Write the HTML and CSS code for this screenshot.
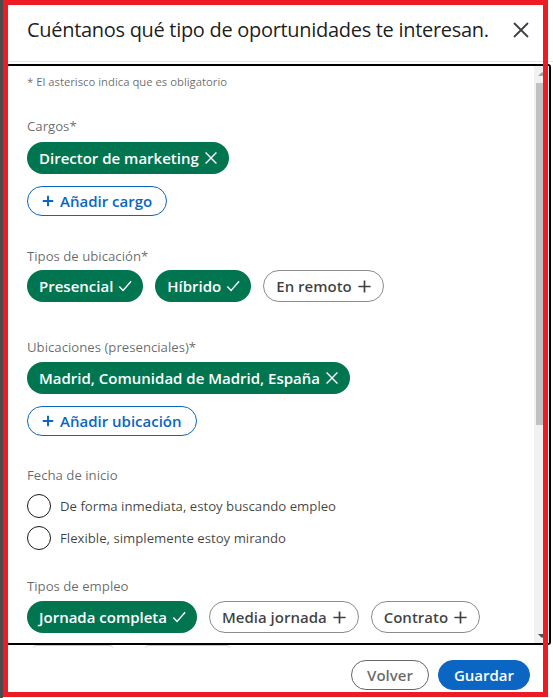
FILE: index.html
```html
<!DOCTYPE html>
<html lang="es">
<head>
<meta charset="utf-8">
<title>Preferencias</title>
<link rel="stylesheet" href="styles.css">
</head>
<body>
<div class="page">
  <div class="backdrop-strip"></div>
  <div class="modal">
    <header class="modal-header">
      <h2 class="modal-title">Cuéntanos qué tipo de oportunidades te interesan.</h2>
      <button class="close-btn" aria-label="Cerrar">
        <svg viewBox="0 0 24 24" width="24" height="24"><path d="M5 5 L19 19 M19 5 L5 19" /></svg>
      </button>
    </header>
    <div class="modal-body">
      <div class="scroll-content">
        <p class="note">* El asterisco indica que es obligatorio</p>

        <section class="field field-cargos">
          <div class="field-label">Cargos*</div>
          <div class="chips">
            <span class="chip chip-on">Director de marketing
              <svg class="ico" viewBox="0 0 16 16"><path d="M1.8 1.8 L14.2 14.2 M14.2 1.8 L1.8 14.2"/></svg></span>
          </div>
          <button class="add-btn">
            <svg class="ico" viewBox="0 0 16 16"><path d="M8 2 V14 M2 8 H14"/></svg>Añadir cargo</button>
        </section>

        <section class="field field-tipos">
          <div class="field-label">Tipos de ubicación*</div>
          <div class="chips">
            <span class="chip chip-on">Presencial
              <svg class="ico" viewBox="0 0 16 16"><path d="M1.5 8.5 L5.8 13 L15 2.5"/></svg></span>
            <span class="chip chip-on">Híbrido
              <svg class="ico" viewBox="0 0 16 16"><path d="M1.5 8.5 L5.8 13 L15 2.5"/></svg></span>
            <span class="chip chip-off">En remoto
              <svg class="ico" viewBox="0 0 16 16"><path d="M8 1.5 V14.5 M1.5 8 H14.5"/></svg></span>
          </div>
        </section>

        <section class="field field-ubic">
          <div class="field-label">Ubicaciones (presenciales)*</div>
          <div class="chips">
            <span class="chip chip-on">Madrid, Comunidad de Madrid, España
              <svg class="ico" viewBox="0 0 16 16"><path d="M1.8 1.8 L14.2 14.2 M14.2 1.8 L1.8 14.2"/></svg></span>
          </div>
          <button class="add-btn">
            <svg class="ico" viewBox="0 0 16 16"><path d="M8 2 V14 M2 8 H14"/></svg>Añadir ubicación</button>
        </section>

        <section class="field field-fecha">
          <div class="field-label">Fecha de inicio</div>
          <label class="radio-row"><span class="radio"></span>De forma inmediata, estoy buscando empleo</label>
          <label class="radio-row"><span class="radio"></span>Flexible, simplemente estoy mirando</label>
        </section>

        <section class="field field-empleo">
          <div class="field-label">Tipos de empleo</div>
          <div class="chips">
            <span class="chip chip-on">Jornada completa
              <svg class="ico" viewBox="0 0 16 16"><path d="M1.5 8.5 L5.8 13 L15 2.5"/></svg></span>
            <span class="chip chip-off">Media jornada
              <svg class="ico" viewBox="0 0 16 16"><path d="M8 1.5 V14.5 M1.5 8 H14.5"/></svg></span>
            <span class="chip chip-off">Contrato
              <svg class="ico" viewBox="0 0 16 16"><path d="M8 1.5 V14.5 M1.5 8 H14.5"/></svg></span>
          </div>
        </section>
      </div>
      <div class="scrollbar" aria-hidden="true">
        <div class="sb-btn"><span class="arrow-up"></span></div>
        <div class="sb-track"><div class="sb-thumb"></div></div>
        <div class="sb-btn sb-btn-down"><span class="arrow-down"></span></div>
      </div>
    </div>
    <footer class="modal-footer">
      <div class="peek">
        <span class="peek-chip peek-a"></span>
        <span class="peek-chip peek-b"></span>
      </div>
      <div class="actions">
        <button class="btn btn-secondary">Volver</button>
        <button class="btn btn-primary">Guardar</button>
      </div>
    </footer>
  </div>
  <div class="highlight"></div>
</div>
</body>
</html>
```

FILE: styles.css
```css
* { box-sizing: border-box; }

html, body {
  margin: 0;
  padding: 0;
  background: #ffffff;
}

body {
  font-family: "Open Sans", "Noto Sans", sans-serif;
  color: rgba(0, 0, 0, 0.9);
  overflow: hidden;
}

.page {
  position: relative;
  display: flex;
  width: 553px;
  height: 698px;
}

.backdrop-strip {
  width: 3px;
  flex: none;
  background: #4b4b4b;
}

.modal {
  flex: 1;
  display: flex;
  flex-direction: column;
  background: #ffffff;
  height: 698px;
}

/* ---------- header ---------- */
.modal-header {
  height: 62px;
  flex: none;
  display: flex;
  align-items: center;
  justify-content: space-between;
  padding: 0 20px 2px 24px;
  border-bottom: 1px solid #e6e6e6;
}

.modal-title {
  margin: 0;
  font-size: 20px;
  font-weight: 400;
  color: rgba(0, 0, 0, 0.9);
  letter-spacing: -0.3px;
}

.close-btn {
  border: 0;
  background: transparent;
  padding: 0;
  width: 24px;
  height: 24px;
  display: flex;
}

.close-btn svg {
  stroke: #404040;
  stroke-width: 1.8;
  fill: none;
}

/* ---------- body ---------- */
.modal-body {
  flex: none;
  display: flex;
  height: 581px;
  margin: 2px 2px 0 3px;
  border: 2px solid #000;
  border-radius: 3px;
  overflow: hidden;
}

.scroll-content {
  flex: 1;
  min-width: 0;
  overflow: hidden;
  padding: 8px 0 0 19px;
}

.scrollbar {
  width: 15px;
  flex: none;
  display: flex;
  flex-direction: column;
  background: #f1f1f1;
}

.sb-btn {
  height: 15px;
  flex: none;
  display: flex;
  align-items: center;
  justify-content: center;
}

.arrow-up {
  width: 0;
  height: 0;
  border-left: 4px solid transparent;
  border-right: 4px solid transparent;
  border-bottom: 4px solid #a3a3a3;
}

.arrow-down {
  width: 0;
  height: 0;
  border-left: 4px solid transparent;
  border-right: 4px solid transparent;
  border-top: 4px solid #505050;
}

.sb-track {
  flex: 1;
  padding: 2px 2px 0 2px;
}

.sb-thumb {
  height: 342px;
  background: #c1c1c1;
}

.note {
  margin: 0;
  font-size: 11.3px;
  line-height: 16px;
  color: rgba(0, 0, 0, 0.6);
}

.field-label {
  font-size: 13.2px;
  line-height: 20px;
  color: rgba(0, 0, 0, 0.6);
  margin-bottom: 5px;
}

.field-cargos { margin-top: 26px; }
.field-tipos { margin-top: 30px; }
.field-ubic { margin-top: 35px; }
.field-fecha { margin-top: 29px; }
.field-empleo { margin-top: 26px; }

.field-cargos .field-label { margin-bottom: 6px; }
.field-tipos .field-label { margin-bottom: 4px; }

.chips {
  display: flex;
  flex-wrap: wrap;
  gap: 12px 12px;
  padding-right: 40px;
}

.chip {
  display: inline-flex;
  align-items: center;
  height: 32px;
  padding: 0 10px 0 12px;
  border-radius: 16px;
  font-size: 15px;
  font-weight: 600;
  gap: 5px;
  white-space: nowrap;
}

.chip .ico {
  width: 14px;
  height: 14px;
  fill: none;
  stroke-width: 1.6;
  margin-right: 1px;
}

.chip-on {
  background: #01754f;
  color: #ffffff;
}
.chip-on .ico { stroke: #ffffff; }

.chip-off {
  border: 1px solid #8c8c8c;
  color: rgba(0, 0, 0, 0.75);
  background: #fff;
}
.chip-off .ico { stroke: #404040; stroke-width: 1.8; width: 15px; height: 15px; }

.add-btn {
  display: inline-flex;
  align-items: center;
  gap: 5px;
  margin-top: 12px;
  height: 30px;
  padding: 0 14px 0 13px;
  border: 1px solid #0a66c2;
  border-radius: 15px;
  background: #fff;
  color: #0a66c2;
  font-family: inherit;
  font-size: 15px;
  font-weight: 600;
}
.add-btn .ico {
  width: 14px;
  height: 14px;
  stroke: #0a66c2;
  stroke-width: 2.2;
  fill: none;
}

.radio-row {
  display: flex;
  align-items: center;
  gap: 9px;
  font-size: 13.2px;
  color: rgba(0, 0, 0, 0.75);
  height: 24px;
  margin-top: 8px;
}
.field-label + .radio-row { margin-top: 9px; }

.radio {
  width: 24px;
  height: 24px;
  border: 1.5px solid #191919;
  border-radius: 50%;
  flex: none;
}

/* ---------- footer ---------- */
.modal-footer {
  flex: 1;
  display: flex;
  flex-direction: column;
  padding: 0 23px 0 0;
}

.peek {
  height: 15px;
  display: flex;
  gap: 32px;
  padding-left: 30px;
}

.peek-chip {
  display: block;
  height: 4px;
  border-top: 1px solid #c8c8c8;
  border-radius: 16px 16px 0 0;
}
.peek-a { width: 80px; }
.peek-b { width: 85px; }

.actions {
  display: flex;
  justify-content: flex-end;
  gap: 9px;
}

.btn {
  height: 30px;
  border-radius: 15px;
  font-family: inherit;
  font-size: 15px;
  font-weight: 600;
  padding: 0 15px;
}

.btn-secondary {
  background: #fff;
  border: 1px solid #666;
  color: rgba(0, 0, 0, 0.6);
}

.btn-primary {
  background: #0a66c2;
  border: 1px solid #0a66c2;
  color: #fff;
}

.highlight {
  position: absolute;
  left: 3px;
  top: 0;
  width: 545px;
  height: 697px;
  border: 5px solid #ed1c24;
  pointer-events: none;
}
```
